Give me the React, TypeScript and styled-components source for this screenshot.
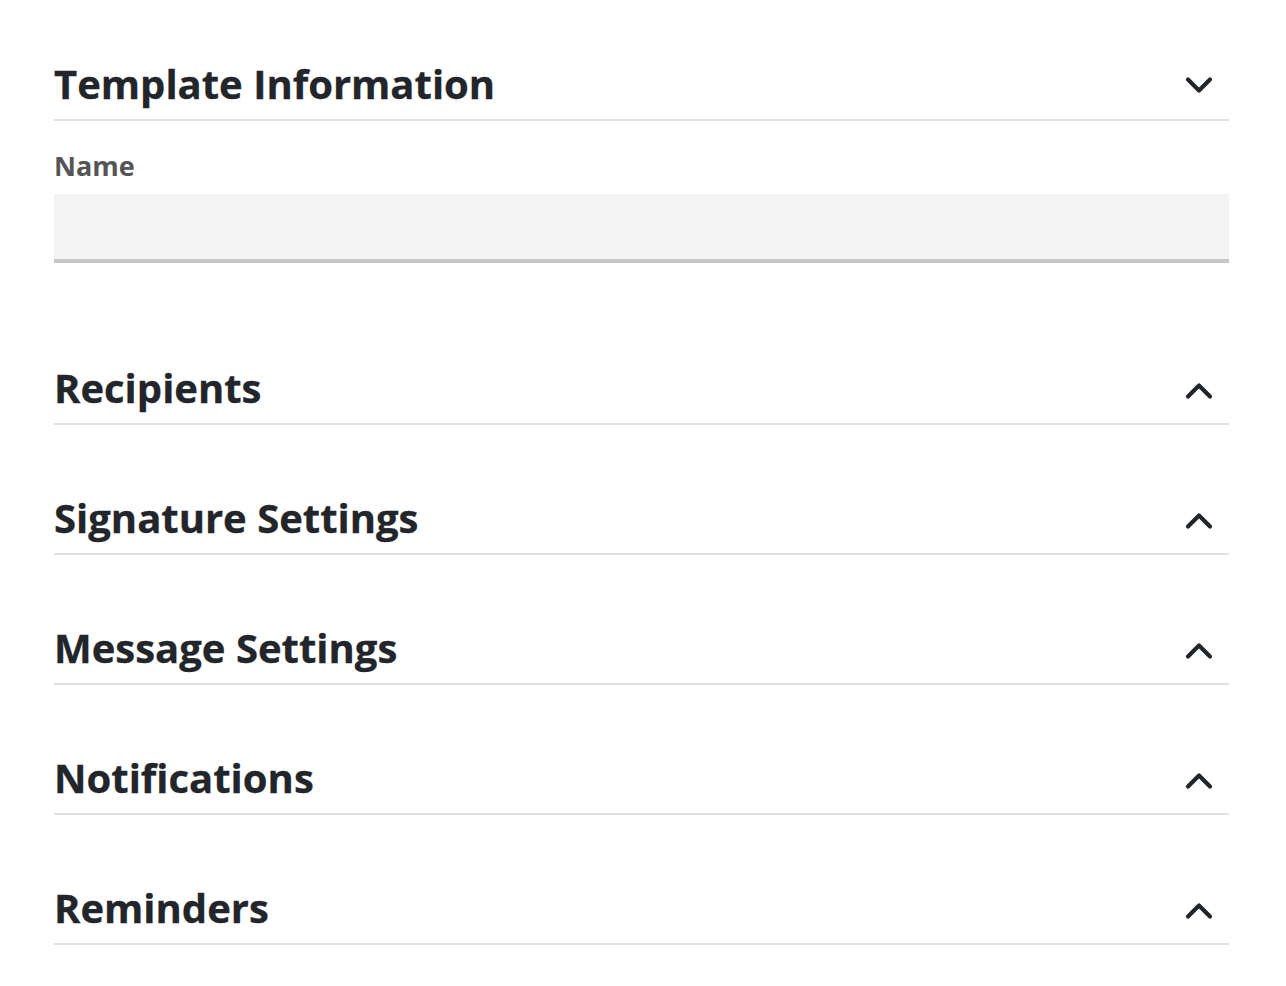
import React from 'react';
import styled, { createGlobalStyle } from 'styled-components';

const GlobalStyle = createGlobalStyle`
  html, body {
    margin: 0;
    padding: 0;
    background: #ffffff;
  }
  body {
    font-family: 'Open Sans', 'Noto Sans', sans-serif;
    color: #222529;
  }
`;

const Page = styled.div`
  display: flex;
  flex-direction: column;
  gap: 66px;
  padding: 57px 57px 40px 54px;
`;

const Section = styled.section`
  display: flex;
  flex-direction: column;
`;

const Header = styled.div`
  display: flex;
  align-items: flex-start;
  justify-content: space-between;
  padding-bottom: 8px;
  border-bottom: 2px solid #e0e0e0;
  cursor: pointer;
`;

const Title = styled.h2`
  margin: 0;
  font-size: 40px;
  font-weight: 700;
  line-height: 54px;
  color: #222529;
  -webkit-text-stroke: 0.3px #222529;
`;

const Toggle = styled.svg`
  flex: none;
  width: 30px;
  height: 30px;
  margin: 14px 15px 0 0;
`;

const Body = styled.div`
  display: flex;
  flex-direction: column;
  padding: 27px 0 32px;
`;

const Label = styled.label`
  font-size: 27px;
  font-weight: 700;
  line-height: 36px;
  color: #555555;
  margin-bottom: 10px;
`;

const TextInput = styled.input`
  box-sizing: border-box;
  width: 100%;
  height: 69px;
  padding: 0 16px;
  border: none;
  border-bottom: 4px solid #c6c6c6;
  background: #f3f3f3;
  font-family: inherit;
  font-size: 26px;
  color: #222529;
  outline: none;
`;

const Chevron = ({ open }: { open: boolean }) => (
  <Toggle viewBox="0 0 30 30" fill="none">
    <polyline
      points={open ? '4,8.5 15,19.5 26,8.5' : '4,21.5 15,10.5 26,21.5'}
      stroke="#222529"
      strokeWidth="4.2"
      strokeLinecap="round"
      strokeLinejoin="round"
    />
  </Toggle>
);

const collapsed = ['Recipients', 'Signature Settings', 'Message Settings', 'Notifications', 'Reminders'];

export default function App() {
  return (
    <>
      <GlobalStyle />
      <Page>
        <Section>
          <Header>
            <Title>Template Information</Title>
            <Chevron open />
          </Header>
          <Body>
            <Label htmlFor="template-name">Name</Label>
            <TextInput id="template-name" type="text" />
          </Body>
        </Section>
        {collapsed.map((title) => (
          <Section key={title}>
            <Header>
              <Title>{title}</Title>
              <Chevron open={false} />
            </Header>
          </Section>
        ))}
      </Page>
    </>
  );
}
